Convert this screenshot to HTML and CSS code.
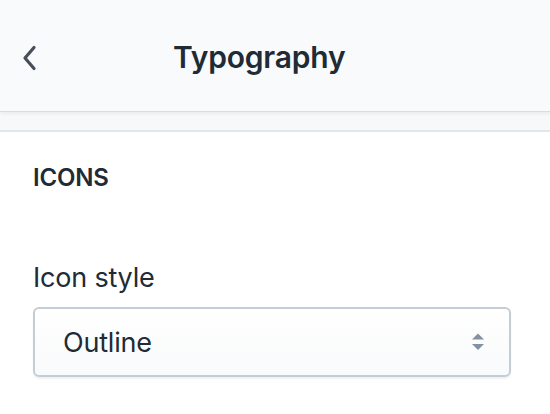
FILE: index.html
```html
<!DOCTYPE html>
<html>
<head>
<meta charset="utf-8">
<link rel="stylesheet" href="styles.css">
</head>
<body>
<div class="panel">
  <header class="topbar">
    <button class="back" aria-label="Back">
      <svg width="16" height="26" viewBox="0 0 16 26"><path d="M13 2.5 L4 13 L13 23.5" fill="none" stroke="#454f5b" stroke-width="3.2" stroke-linecap="round" stroke-linejoin="round"/></svg>
    </button>
    <h1 class="title">Typography</h1>
  </header>
  <div class="strip"></div>
  <section class="content">
    <h2 class="section-label">ICONS</h2>
    <label class="field-label" for="icon-style">Icon style</label>
    <div class="select">
      <span class="select-value">Outline</span>
      <svg class="select-arrows" width="12" height="20" viewBox="0 0 12 20"><path d="M6 1.5 L12 7.5 L0 7.5 Z" fill="#8391a0"/><path d="M0 12 L12 12 L6 18 Z" fill="#8391a0"/></svg>
    </div>
  </section>
</div>
</body>
</html>
```
FILE: styles.css
```css
html, body {
  margin: 0;
  padding: 0;
  background: #ffffff;
}
body {
  font-family: "Inter", "Noto Sans", "Liberation Sans", sans-serif;
  color: #212b36;
  width: 550px;
  height: 414px;
  overflow: hidden;
}
.topbar {
  height: 112px;
  box-sizing: border-box;
  display: flex;
  align-items: center;
  background: #f9fafb;
  border-bottom: 1px solid #dadee3;
  box-shadow: 0 2px 3px rgba(0,0,0,0.05);
  position: relative;
  z-index: 1;
}
.back {
  width: 173px;
  height: 100%;
  display: flex;
  align-items: center;
  padding: 5px 0 0 21px;
  margin: 0;
  border: 0;
  background: none;
  box-sizing: border-box;
}
.title {
  margin: 0;
  font-size: 30px;
  font-weight: 600;
  color: #212b36;
  letter-spacing: -0.2px;
  padding-top: 2px;
}
.strip {
  height: 18px;
  background: #f7f8f9;
  border-bottom: 2px solid #e4e7ea;
}
.content {
  padding: 31px 33px 0 33px;
}
.section-label {
  margin: 0;
  font-size: 24px;
  line-height: 30px;
  font-weight: 600;
  color: #212b36;
  letter-spacing: -0.2px;
}
.field-label {
  display: block;
  margin-top: 68px;
  font-size: 27px;
  line-height: 34px;
  color: #212b36;
  letter-spacing: -0.2px;
}
.select {
  margin-top: 12px;
  height: 70px;
  box-sizing: border-box;
  border: 2px solid #c4cdd5;
  border-radius: 6px;
  background: linear-gradient(#ffffff, #f9fafb);
  box-shadow: 0 2px 2px rgba(0,0,0,0.06);
  display: flex;
  align-items: center;
  justify-content: space-between;
  padding: 0 25px 0 28px;
  width: 478px;
}
.select-value {
  font-size: 27px;
  color: #212b36;
  letter-spacing: -0.2px;
}
.select-arrows {
  display: block;
}
```
